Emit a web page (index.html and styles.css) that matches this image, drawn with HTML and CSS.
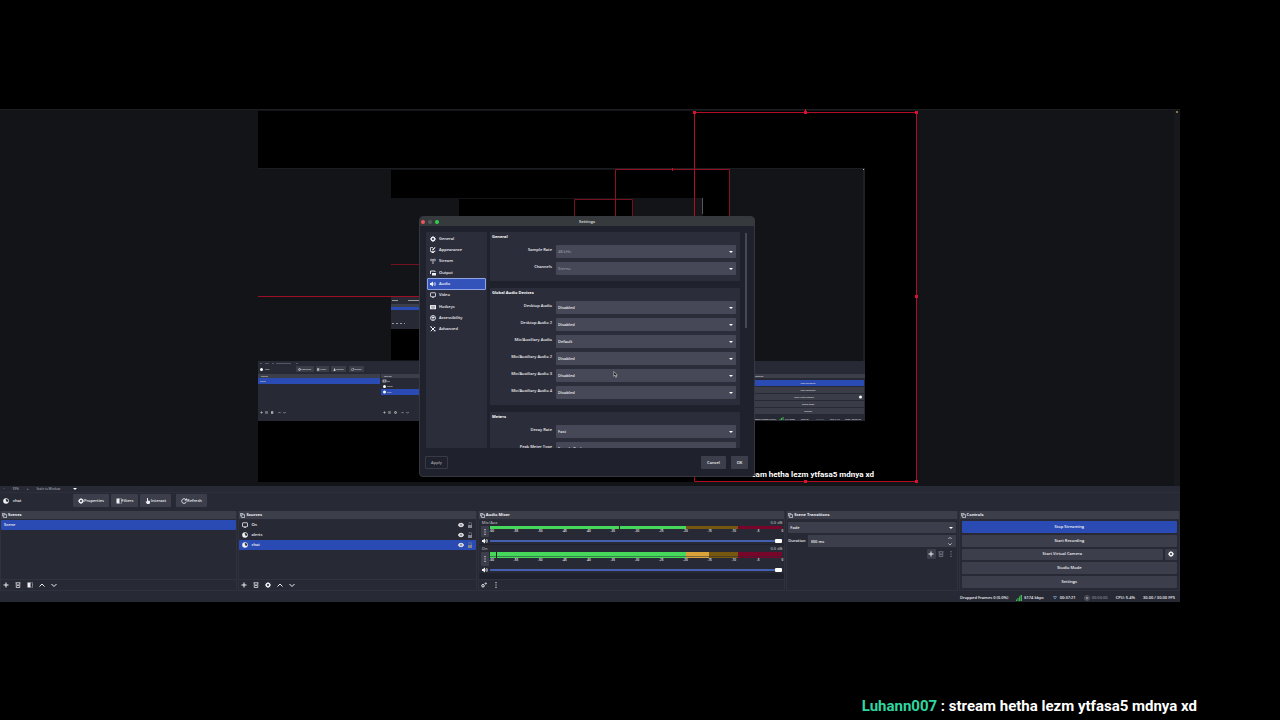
FILE: index.html
```html
<!DOCTYPE html>
<html lang="en">
<head>
<meta charset="utf-8">
<title>Stream</title>
<link rel="stylesheet" href="styles.css">
</head>
<body>

<!-- icons -->
<svg class="defs" width="0" height="0">
    <symbol id="gear" viewBox="0 0 12 12"><circle cx="6" cy="6" r="3.4" fill="none" stroke="currentColor" stroke-width="2.6"/><path d="M6 0v2M6 10v2M0 6h2M10 6h2M1.8 1.8l1.4 1.4M8.8 8.8l1.4 1.4M1.8 10.2l1.4-1.4M8.8 3.2l1.4-1.4" stroke="currentColor" stroke-width="1.8"/></symbol>
    <symbol id="globe" viewBox="0 0 12 12"><circle cx="6" cy="6" r="5.6" fill="currentColor"/><path d="M6.500 2l3 1 1 3-2 2-2-1V5L5 4z" fill="#272935"/></symbol>
    <symbol id="filter" viewBox="0 0 12 12"><path d="M1 1h6v10H1z" fill="currentColor"/><path d="M7 1.6h4v8.8H7" fill="none" stroke="currentColor" stroke-width="1.2" stroke-dasharray="2 1"/></symbol>
    <symbol id="hand" viewBox="0 0 12 12"><path d="M4 0h2v5l4 1v3l-1 3H4L1 7h3z" fill="currentColor"/></symbol>
    <symbol id="refresh" viewBox="0 0 12 12"><path d="M9.6 3.2A4.6 4.6 0 1 0 10.6 7" fill="none" stroke="currentColor" stroke-width="1.8"/><path d="M11.6 0v5H6.8z" fill="currentColor"/></symbol>
    <symbol id="dock" viewBox="0 0 12 12"><path d="M1 8V1h7M4 4h7v7H4z" fill="none" stroke="currentColor" stroke-width="1.6"/></symbol>
    <symbol id="plus" viewBox="0 0 12 12"><path d="M6 1v10M1 6h10" stroke="currentColor" stroke-width="2"/></symbol>
    <symbol id="trash" viewBox="0 0 12 12"><path d="M1 1.5h10M2.5 2v9h7V2M5 5v3M7 5v3" fill="none" stroke="currentColor" stroke-width="1.5"/></symbol>
    <symbol id="up" viewBox="0 0 12 12"><path d="M1 9l5-5 5 5" fill="none" stroke="currentColor" stroke-width="2"/></symbol>
    <symbol id="down" viewBox="0 0 12 12"><path d="M1 4l5 5 5-5" fill="none" stroke="currentColor" stroke-width="2"/></symbol>
    <symbol id="dots" viewBox="0 0 12 12"><path d="M5 0h2v2.4H5zM5 4.8h2v2.4H5zM5 9.6h2V12H5z" fill="currentColor"/></symbol>
    <symbol id="eye" viewBox="0 0 12 12"><path d="M0 6c3-6 9-6 12 0-3 6-9 6-12 0z" fill="currentColor"/><circle cx="6" cy="6" r="2" fill="none" stroke="#272935"/></symbol>
    <symbol id="lock" viewBox="0 0 12 12"><path d="M2 6h8v6H2z" fill="currentColor"/><path d="M4 4.500V3a2.500 2.500 0 0 1 5 0v3" fill="none" stroke="currentColor" stroke-width="1.300"/></symbol>
    <symbol id="screen" viewBox="0 0 12 12"><rect x="1" y="1.500" width="10" height="8" rx="1" fill="none" stroke="currentColor" stroke-width="1.600"/><path d="M4 11.200h4" stroke="currentColor" stroke-width="1.400"/></symbol>
    <symbol id="speaker" viewBox="0 0 12 12"><path d="M0 4h2l4-3v10L2 8H0z" fill="currentColor"/><path d="M7.500 4q1.500 2 0 4M9.300 2q3 4 0 8" fill="none" stroke="currentColor" stroke-width="1.400"/></symbol>
    <symbol id="look" viewBox="0 0 12 12"><path d="M10 7v2H1V1h5" fill="none" stroke="currentColor" stroke-width="1.500"/><path d="M4 7l1-3 5-4 1 1-4 5zM3 10h5v2H3z" fill="currentColor"/></symbol>
    <symbol id="antenna" viewBox="0 0 12 12"><path d="M6 4v8M2.500 1.500q-2 2 0 5M9.500 1.500q2 2 0 5M3 3.500h6" fill="none" stroke="currentColor" stroke-width="1.500"/></symbol>
    <symbol id="output" viewBox="0 0 12 12"><path d="M1 8V2h9v2" fill="none" stroke="currentColor" stroke-width="1.800"/><path d="M4 6h8v5H4z" fill="currentColor"/></symbol>
    <symbol id="keys" viewBox="0 0 12 12"><rect y="2" width="12" height="8.500" rx="1" fill="currentColor"/><path d="M2 4.500h8M2 6.500h8M3.500 8.600h5" stroke="#2b2d3a" stroke-dasharray="1.500 .7"/></symbol>
    <symbol id="person" viewBox="0 0 12 12"><circle cx="6" cy="6" r="5" fill="none" stroke="currentColor" stroke-width="1.700"/><circle cx="6" cy="3.500" r="1.200" fill="currentColor"/><path d="M3 5h6M6 5v5" stroke="currentColor" stroke-width="1.800"/></symbol>
    <symbol id="tools" viewBox="0 0 12 12"><path d="M1.500 1.500l9 9M10 2l-8.500 8.500" stroke="currentColor" stroke-width="2"/><path d="M0 3l3-3M8 1.500l2.500 2.500M8 11l3-3" stroke="currentColor" stroke-width="1.500"/></symbol>
    <symbol id="gears" viewBox="0 0 12 12"><circle cx="4" cy="7.500" r="2.500" fill="none" stroke="currentColor" stroke-width="2"/><circle cx="9.500" cy="3" r="1.300" fill="none" stroke="currentColor" stroke-width="1.800"/></symbol>
</svg>

<div class="app">
    <div class="preview">
        <div class="stage">
            <svg class="canvas" viewBox="0 0 658 371">
                <rect width="658" height="371" fill="#000"/>
                <!-- first mirror -->
                <rect y="57" width="607" height="253" fill="#272935"/>
                <rect y="57" width="607" height="193" fill="#131418"/>
                <path d="M0 57.500h607" stroke="#1c1d21"/>
                <path d="M606 58v192" stroke="#2b2c30"/>
                <rect x="605" y="58" width="1" height="1" fill="#cb9"/>
                <rect x="133" y="59" width="338" height="190" fill="#000"/>
                <!-- second mirror -->
                <rect x="133" y="87" width="312" height="131" fill="#272935"/>
                <rect x="133" y="87" width="312" height="99" fill="#131418"/>
                <rect x="201" y="88" width="174" height="98" fill="#000"/>
                <path d="M444.500 87v16" stroke="#55575d"/>
                <path d="M316.500 186V88.500h58V186" fill="none" stroke="#74101f"/>
                <rect x="133" y="153" width="224" height="1" fill="#74101f"/>
                <rect x="133" y="193" width="60" height="3" fill="#3c3e4a"/>
                <rect x="133" y="196" width="60" height="3" fill="#2a4bb4"/>
                <path d="M134 189.500h6M150 189.500h12" stroke="#999"/>
                <path d="M134 212.500h13" stroke="#999" stroke-dasharray="2 2"/>
                <path d="M357.500 249V58.500h114V249" fill="none" stroke="#8e1023"/>
                <path d="M414.500 57v3" stroke="#c01030"/>
                <!-- bottom docks of the first mirror -->
                <g class="mini">
                    <path d="M2 252.500h2M7 252.500h4M14 252.500h2M18 252.500h15M38 252.500h2" stroke="#555762"/>
                    <rect x="38" y="255" width="18" height="6" fill="#3a3c48"/>
                    <rect x="58" y="255" width="13" height="6" fill="#3a3c48"/>
                    <rect x="73" y="255" width="15" height="6" fill="#3a3c48"/>
                    <rect x="91" y="255" width="15" height="6" fill="#3a3c48"/>
                    <circle cx="3.500" cy="258.500" r="1.500" fill="#fff"/>
                    <use href="#gear" x="40" y="257" width="3" height="3"/>
                    <use href="#filter" x="59" y="257" width="3" height="3"/>
                    <use href="#hand" x="75" y="257" width="3" height="3"/>
                    <use href="#refresh" x="93" y="257" width="3" height="3"/>
                    <text x="7" y="259">chat</text>
                    <text x="43" y="259">Properties</text>
                    <text x="62" y="259">Filters</text>
                    <text x="78" y="259">Interact</text>
                    <text x="96" y="259">Refresh</text>
                    <rect y="263" width="122" height="4" fill="#3c3e4a"/>
                    <rect x="123" y="263" width="122" height="4" fill="#3c3e4a"/>
                    <text x="3" y="266">Scenes</text>
                    <text x="126" y="266">Sources</text>
                    <rect y="267" width="122" height="6" fill="#2a4bb4"/>
                    <text x="2" y="271">Scene</text>
                    <text x="129" y="271">On</text>
                    <text x="129" y="276">alerts</text>
                    <rect x="123" y="278" width="122" height="6" fill="#2a4bb4"/>
                    <text x="129" y="282">chat</text>
                    <rect x="125" y="269" width="3" height="2" fill="none" stroke="#fff" stroke-width=".6"/>
                    <circle cx="126.500" cy="275.500" r="1.500" fill="#fff"/>
                    <circle cx="126.500" cy="281" r="1.500" fill="#fff"/>
                    <use href="#plus" x="2" y="300" width="3" height="3"/>
                    <use href="#trash" x="7" y="300" width="3" height="3"/>
                    <use href="#filter" x="13" y="300" width="3" height="3"/>
                    <use href="#up" x="20" y="300" width="3" height="3"/>
                    <use href="#down" x="25" y="300" width="3" height="3"/>
                    <use href="#plus" x="125" y="300" width="3" height="3"/>
                    <use href="#trash" x="130" y="300" width="3" height="3"/>
                    <use href="#gear" x="136" y="300" width="3" height="3"/>
                    <use href="#up" x="143" y="300" width="3" height="3"/>
                    <use href="#down" x="148" y="300" width="3" height="3"/>
                    <rect x="493" y="263" width="114" height="4" fill="#3c3e4a"/>
                    <text x="497" y="266">Controls</text>
                    <rect x="494" y="269" width="112" height="6" fill="#2a4bb4"/>
                    <rect x="494" y="276" width="112" height="6" fill="#3a3c48"/>
                    <rect x="494" y="283" width="112" height="6" fill="#3a3c48"/>
                    <rect x="494" y="290" width="112" height="6" fill="#3a3c48"/>
                    <rect x="494" y="297" width="112" height="6" fill="#3a3c48"/>
                    <g text-anchor="middle">
                        <text x="550" y="273">Stop Streaming</text>
                        <text x="550" y="280">Start Recording</text>
                        <text x="546" y="287">Start Virtual Camera</text>
                        <text x="550" y="294">Studio Mode</text>
                        <text x="550" y="301">Settings</text>
                    </g>
                    <circle cx="602.500" cy="286" r="1.500" fill="#fff"/>
                    <text x="494" y="309">Dropped Frames 0 (0.0%)</text>
                    <path d="M522 309v-1M523.500 309v-2M525 309v-3" stroke="#3fb950"/>
                    <text x="527" y="309">6174 kbps</text>
                    <text x="543" y="309">00:37:21</text>
                    <text x="558" y="309" fill="#777984">00:00:00</text>
                    <text x="572" y="309">CPU: 5.4%</text>
                    <text x="587" y="309">30.00 / 30.00 FPS</text>
                </g>
                <text class="mini-chat" x="616" y="366" text-anchor="end">Luhann007 : stream hetha lezm ytfasa5 mdnya xd</text>
                <!-- selection -->
                <rect y="185" width="436" height="1" fill="#a00e26"/>
                <path d="M436.500 1.500h222v369h-222z" fill="none" stroke="#b30d26"/>
                <path d="M547.500 -2v5" stroke="#d81233"/>
                <path d="M435 0h3v3h-3zM546 0h3v3h-3zM657 0h3v3h-3zM657 184h3v3h-3zM546 369h3v3h-3zM657 369h3v3h-3z" fill="#d81233"/>
            </svg>

            <div class="dialog" role="dialog" aria-label="Settings">
                <div class="titlebar">
                    <span class="light red"></span><span class="light off"></span><span class="light green"></span>
                    <h1>Settings</h1>
                </div>
                <div class="dialog-body">
                    <nav class="side">
                        <a href="#"><svg><use href="#gear"/></svg>General</a>
                        <a href="#"><svg><use href="#look"/></svg>Appearance</a>
                        <a href="#"><svg><use href="#antenna"/></svg>Stream</a>
                        <a href="#"><svg><use href="#output"/></svg>Output</a>
                        <a href="#" class="active"><svg><use href="#speaker"/></svg>Audio</a>
                        <a href="#"><svg><use href="#screen"/></svg>Video</a>
                        <a href="#"><svg><use href="#keys"/></svg>Hotkeys</a>
                        <a href="#"><svg><use href="#person"/></svg>Accessibility</a>
                        <a href="#"><svg><use href="#tools"/></svg>Advanced</a>
                    </nav>
                    <div class="groups">
                        <section class="group">
                            <h2>General</h2>
                            <div class="row"><label for="rate">Sample Rate</label><div class="combo"><select id="rate" disabled><option>48 kHz</option></select></div></div>
                            <div class="row"><label for="channels">Channels</label><div class="combo"><select id="channels" disabled><option>Stereo</option></select></div></div>
                        </section>
                        <section class="group">
                            <h2>Global Audio Devices</h2>
                            <div class="row"><label for="desk1">Desktop Audio</label><div class="combo"><select id="desk1"><option>Disabled</option></select></div></div>
                            <div class="row"><label for="desk2">Desktop Audio 2</label><div class="combo"><select id="desk2"><option>Disabled</option></select></div></div>
                            <div class="row"><label for="mic1">Mic/Auxiliary Audio</label><div class="combo"><select id="mic1"><option>Default</option></select></div></div>
                            <div class="row"><label for="mic2">Mic/Auxiliary Audio 2</label><div class="combo"><select id="mic2"><option>Disabled</option></select></div></div>
                            <div class="row"><label for="mic3">Mic/Auxiliary Audio 3</label><div class="combo"><select id="mic3"><option>Disabled</option></select></div></div>
                            <div class="row"><label for="mic4">Mic/Auxiliary Audio 4</label><div class="combo"><select id="mic4"><option>Disabled</option></select></div></div>
                        </section>
                        <section class="group">
                            <h2>Meters</h2>
                            <div class="row"><label for="decay">Decay Rate</label><div class="combo"><select id="decay"><option>Fast</option></select></div></div>
                            <div class="row"><label for="peak">Peak Meter Type</label><div class="combo"><select id="peak"><option>Sample Peak</option></select></div></div>
                        </section>
                    </div>
                    <div class="scroll"></div>
                </div>
                <div class="dialog-foot">
                    <button class="apply" disabled>Apply</button>
                    <button>Cancel</button>
                    <button class="ok">OK</button>
                </div>
                <svg class="cursor" viewBox="0 0 8 12"><path d="M1 1v8l2-2 1.500 4 1.500-1-1.500-3H7z" fill="#111" stroke="#ddd"/></svg>
            </div>
        </div>
        <div class="gutter"></div>
    </div>

    <div class="zoombar"><span>−</span><span>59%</span><span>+</span><span>Scale to Window</span><i class="caret"></i></div>

    <div class="sourcebar">
        <div class="current"><svg><use href="#globe"/></svg>chat</div>
        <button class="props"><svg><use href="#gear"/></svg>Properties</button>
        <button class="filters"><svg><use href="#filter"/></svg>Filters</button>
        <button><svg><use href="#hand"/></svg>Interact</button>
        <button class="reload"><svg><use href="#refresh"/></svg>Refresh</button>
    </div>

    <div class="docks">
        <section class="dock">
            <h2><svg><use href="#dock"/></svg>Scenes</h2>
            <ul class="list">
                <li class="selected">Scene</li>
            </ul>
            <div class="tools">
                <button aria-label="Add scene"><svg><use href="#plus"/></svg></button>
                <button aria-label="Remove scene"><svg><use href="#trash"/></svg></button>
                <button aria-label="Scene filters"><svg><use href="#filter"/></svg></button>
                <button aria-label="Move scene up"><svg><use href="#up"/></svg></button>
                <button aria-label="Move scene down"><svg><use href="#down"/></svg></button>
            </div>
        </section>

        <section class="dock">
            <h2><svg><use href="#dock"/></svg>Sources</h2>
            <ul class="list">
                <li><svg><use href="#screen"/></svg><span>On</span><svg><use href="#eye"/></svg><svg class="dim"><use href="#lock"/></svg></li>
                <li><svg><use href="#globe"/></svg><span>alerts</span><svg><use href="#eye"/></svg><svg class="dim"><use href="#lock"/></svg></li>
                <li class="selected"><svg><use href="#globe"/></svg><span>chat</span><svg><use href="#eye"/></svg><svg class="dim"><use href="#lock"/></svg></li>
            </ul>
            <div class="tools">
                <button aria-label="Add source"><svg><use href="#plus"/></svg></button>
                <button aria-label="Remove source"><svg><use href="#trash"/></svg></button>
                <button aria-label="Source properties"><svg><use href="#gear"/></svg></button>
                <button aria-label="Move source up"><svg><use href="#up"/></svg></button>
                <button aria-label="Move source down"><svg><use href="#down"/></svg></button>
            </div>
        </section>

        <section class="dock">
            <h2><svg><use href="#dock"/></svg>Audio Mixer</h2>
            <div class="mixer">
                <div class="channel">
                    <div class="names"><label for="vol1">Mic/Aux</label><span>0.0 dB</span></div>
                    <button class="menu" aria-label="Mic/Aux options"><svg><use href="#dots"/></svg></button>
                    <div class="levels">
                        <div class="meter"><i class="g"></i><i class="y"></i><i class="r"></i><b class="peak mid"></b></div>
                        <div class="scale"><span>-60</span><span>-55</span><span>-50</span><span>-45</span><span>-40</span><span>-35</span><span>-30</span><span>-25</span><span>-20</span><span>-15</span><span>-10</span><span>-5</span><span>0</span></div>
                    </div>
                    <button class="mute" aria-label="Mute Mic/Aux"><svg><use href="#speaker"/></svg></button>
                    <input id="vol1" type="range" min="0" max="100" value="100">
                </div>
                <div class="channel">
                    <div class="names"><label for="vol2">On</label><span>0.0 dB</span></div>
                    <button class="menu" aria-label="On options"><svg><use href="#dots"/></svg></button>
                    <div class="levels">
                        <div class="meter stereo"><i class="g"></i><i class="yy"></i><i class="y short"></i><i class="r"></i><b class="peak low"></b></div>
                        <div class="scale"><span>-60</span><span>-55</span><span>-50</span><span>-45</span><span>-40</span><span>-35</span><span>-30</span><span>-25</span><span>-20</span><span>-15</span><span>-10</span><span>-5</span><span>0</span></div>
                    </div>
                    <button class="mute" aria-label="Mute On"><svg><use href="#speaker"/></svg></button>
                    <input id="vol2" type="range" min="0" max="100" value="100">
                </div>
            </div>
            <div class="tools">
                <button aria-label="Advanced audio"><svg><use href="#gears"/></svg></button>
                <button aria-label="Mixer menu"><svg><use href="#dots"/></svg></button>
            </div>
        </section>

        <section class="dock">
            <h2><svg><use href="#dock"/></svg>Scene Transitions</h2>
            <div class="transitions">
                <div class="combo"><select aria-label="Transition"><option>Fade</option></select></div>
                <div class="duration">
                    <label for="duration">Duration</label>
                    <div class="spin">
                        <input id="duration" type="text" value="300 ms">
                        <svg><use href="#up"/></svg>
                        <svg><use href="#down"/></svg>
                    </div>
                </div>
                <div class="trans-tools">
                    <button class="add" aria-label="Add transition"><svg><use href="#plus"/></svg></button>
                    <button class="dim" aria-label="Remove transition"><svg><use href="#trash"/></svg></button>
                    <button class="dim" aria-label="Transition menu"><svg><use href="#dots"/></svg></button>
                </div>
            </div>
        </section>

        <section class="dock">
            <h2><svg><use href="#dock"/></svg>Controls</h2>
            <div class="controls">
                <button class="live">Stop Streaming</button>
                <button>Start Recording</button>
                <div class="camera"><button>Start Virtual Camera</button><button aria-label="Camera settings"><svg><use href="#gear"/></svg></button></div>
                <button>Studio Mode</button>
                <button>Settings</button>
            </div>
        </section>
    </div>

    <div class="status">
        <span>Dropped Frames 0 (0.0%)</span>
        <span><svg viewBox="0 0 12 12"><path d="M0 12V9h2v3zM3 12V6h2v6zM6 12V3h2v9zM9 12V0h3v12z" fill="#3fb950"/></svg>6174 kbps</span>
        <span><svg viewBox="0 0 12 12"><path d="M2 4q4-2 8 0M4 7q2-2 4 0" fill="none" stroke="#6b94b8" stroke-width="2"/></svg>00:37:21</span>
        <span class="dim"><svg viewBox="0 0 12 12"><circle cx="6" cy="6" r="5" fill="none" stroke="currentColor"/><circle cx="6" cy="6" r="3" fill="currentColor"/></svg>00:00:00</span>
        <span>CPU: 5.4%</span>
        <span>30.00 / 30.00 FPS</span>
    </div>
</div>

<p class="chat"><span>Luhann007</span> : stream hetha lezm ytfasa5 mdnya xd</p>

</body>
</html>
```
FILE: styles.css
```css
* {
    box-sizing: border-box;
}

body {
    margin: 0;
    background: #000;
    color: #f0f0f4;
    font-family: "Open Sans", sans-serif;
    font-size: 4px;
    font-weight: 600;
    line-height: 8px;
    overflow: hidden;
}

.defs {
    position: absolute;
}

button, select, input {
    margin: 0;
    padding: 0;
    border: 0;
    background: #3c3f4b;
    color: inherit;
    font: inherit;
    border-radius: 1px;
}

svg {
    flex: none;
    width: 6px;
    height: 6px;
}

h1, h2, ul, p {
    margin: 0;
    padding: 0;
    font-size: inherit;
}

.dim {
    color: #83858f;
}

.app {
    margin: 109px 100px 0 0;
    background: #272935;
}

/* preview */
.preview {
    display: flex;
    padding-top: 1px;
    height: 377px;
    background: #131418;
    border-top: 1px solid #1c1d21;
}

.gutter {
    width: 6px;
    background: #18191d;
}

.gutter::before {
    content: "";
    display: block;
    width: 2px;
    height: 2px;
    margin: 0 auto;
    background: #8a7340;
}

.stage {
    position: relative;
    flex: 1;
}

.canvas {
    display: block;
    width: 100%;
    height: auto;
    max-width: 658px;
    margin: 0 auto;
    overflow: visible;
}

.mini {
    color: #ddd;
    fill: #ddd;
    font-size: 2px;
}

.mini-chat {
    fill: #fff;
    font: bold 8px Roboto, sans-serif;
}

/* settings window */
.dialog {
    position: absolute;
    top: 105px;
    left: 0;
    right: 0;
    width: 336px;
    margin: 0 auto;
    background: #1f212c;
    border: 1px solid #363840;
    border-radius: 4px;
    overflow: hidden;
}

.titlebar {
    display: flex;
    align-items: center;
    gap: 3px;
    height: 9px;
    padding-left: 1px;
    background: #373a3c;
}

.titlebar h1 {
    flex: 1;
    padding-right: 22px;
    text-align: center;
    color: #c4c5c8;
}

.light {
    width: 4px;
    height: 4px;
    border-radius: 50%;
}

.red { background: #f0555a; }
.off { background: #55585c; }
.green { background: #2fd04a; }

.dialog-body {
    display: flex;
    height: 216px;
    margin: 6px 6px 0;
}

.side {
    display: grid;
    grid-auto-rows: 1fr;
    width: 61px;
    padding: 1px 1px 113px;
    background: #2b2d3a;
}

.side a {
    display: flex;
    align-items: center;
    gap: 3px;
    padding-left: 2px;
    border: 1px solid transparent;
    border-radius: 1px;
    color: inherit;
    text-decoration: none;
}

.side .active {
    background: #3353bb;
    border-color: #8ea4e6;
}

.groups {
    flex: 1;
    margin-left: 3px;
    overflow: hidden;
}

.group {
    padding-bottom: 2px;
    margin-bottom: 7px;
    background: #2b2d3a;
}

.group h2 {
    height: 13px;
    padding-left: 2px;
    line-height: 10px;
    color: #fff;
}

.row {
    display: grid;
    grid-template-columns: 62px 1fr;
    gap: 4px;
    height: 13px;
    margin: 0 4px 4px 0;
}

.row label {
    text-align: right;
    line-height: 10px;
}

.combo {
    position: relative;
}

.combo select {
    display: block;
    appearance: none;
    width: 100%;
    height: 13px;
    padding-left: 2px;
    background: #464857;
}

.combo select:disabled {
    color: #8e909b;
    opacity: 1;
}

.combo::after, .caret {
    border: 2px solid transparent;
    border-top-color: #fff;
    border-bottom: 0;
}

.combo::after {
    content: "";
    position: absolute;
    right: 3px;
    top: 6px;
}

.scroll {
    width: 2px;
    height: 95px;
    margin: 1px 1px 0 5px;
    background: #464857;
}

.dialog-foot {
    display: flex;
    gap: 5px;
    padding: 8px 6px 7px 5px;
}

.dialog-foot button {
    width: 25px;
    height: 13px;
}

.dialog-foot .ok {
    width: 17px;
}

.dialog-foot .apply {
    width: 23px;
    margin-right: auto;
    background: none;
    border: 1px solid #383a47;
    color: #a2a4ad;
}

.cursor {
    position: absolute;
    left: 193px;
    top: 154px;
    width: 5px;
    height: 7px;
}

/* bars under the preview */
.zoombar {
    display: flex;
    align-items: center;
    height: 7px;
    gap: 8px;
    padding-left: 3px;
    font-size: 3px;
    line-height: 6px;
    color: #9a9ca6;
    border-bottom: 1px solid #2d303c;
}

.caret {
    margin-left: 5px;
}

.sourcebar {
    display: flex;
    height: 18px;
    padding: 1px 3px 4px;
    gap: 2px;
}

.current {
    display: flex;
    align-items: center;
    gap: 4px;
    width: 68px;
}

.sourcebar button {
    display: flex;
    align-items: center;
    justify-content: center;
    width: 31px;
}

.sourcebar .props {
    width: 36px;
}

.sourcebar .filters {
    width: 27px;
}

.sourcebar .reload {
    margin-left: 3px;
}

/* docks */
.docks {
    display: grid;
    grid-template-columns: 237fr 238fr 307fr 171fr 221fr;
    gap: 1px;
    height: 80px;
}

.dock {
    display: flex;
    flex-direction: column;
    min-width: 0;
    border: 1px solid #2f323e;
    border-top: 0;
}

.dock h2 {
    display: flex;
    align-items: center;
    gap: 1px;
    height: 8px;
    padding-left: 1px;
    background: #3c3e4a;
}

.dock h2 svg {
    width: 5px;
    height: 5px;
}

.list {
    flex: 1;
    padding-top: 1px;
    list-style: none;
}

.list li {
    display: flex;
    align-items: center;
    gap: 3px;
    height: 10px;
    padding: 0 3px;
    border-radius: 1px;
}

.list span {
    flex: 1;
}

.list .selected {
    background: #2a4bb4;
}

.tools {
    display: flex;
    align-items: center;
    gap: 6px;
    height: 11px;
    padding-left: 2px;
    border-top: 1px solid #30333f;
}

.tools button {
    display: grid;
    background: none;
}

/* mixer */
.mixer {
    flex: 1;
    background: #1f212c;
}

.channel {
    display: grid;
    grid-template-columns: 8px 1fr;
    column-gap: 1px;
    padding: 0 2px;
    background: #272935;
    margin-bottom: 1px;
}

.names {
    grid-column: 1 / 3;
    display: flex;
    justify-content: space-between;
    padding: 1px 0 0 1px;
    line-height: 6px;
    color: #a9abb4;
}

.menu, .mute {
    display: grid;
    place-items: center;
}

.mute {
    background: none;
}

.meter {
    position: relative;
    display: flex;
    height: 3px;
}

.stereo {
    height: 6px;
}

.meter i {
    width: 15%;
}

.meter .g { width: 67%; background: #45d85b; }
.meter .y { width: 18%; background: #75570f; }
.meter .yy { width: 8%; background: #d9a33a; }
.meter .short { width: 10%; }
.meter .r { background: #78062a; }

/* gap between the left and right channel */
.stereo::after {
    content: "";
    position: absolute;
    top: 4px;
    left: 0;
    right: 0;
    height: 1px;
    background: #27293580;
}

.peak {
    position: absolute;
    width: 1px;
    height: 100%;
    background: #102012;
}

.mid { left: 44%; }
.low { left: 2%; }

.scale {
    display: flex;
    justify-content: space-between;
    height: 8px;
    padding-left: 2px;
    font-size: 3px;
    line-height: 5px;
}

.scale span {
    width: 0;
    display: flex;
    justify-content: center;
}

input[type=range] {
    appearance: none;
    height: 7px;
    width: 100%;
    background: none;
}

input[type=range]::-webkit-slider-runnable-track {
    height: 2px;
    background: #4560b0;
}

input[type=range]::-webkit-slider-thumb {
    appearance: none;
    width: 7px;
    height: 4px;
    margin-top: -1px;
    border-radius: 1px;
    background: #fff;
}

/* transitions */
.transitions {
    display: grid;
    gap: 2px;
    padding: 3px 1px;
}

.transitions .combo select {
    height: 11px;
    background: #3c3f4b;
}

.transitions .combo::after {
    top: 5px;
}

.duration {
    display: flex;
    align-items: center;
    gap: 2px;
}

.spin {
    flex: 1;
    display: grid;
    grid-template-columns: 1fr 8px;
    align-items: center;
    background: #3c3f4b;
}

.spin input {
    grid-row: 1 / 3;
    width: 100%;
    height: 12px;
    padding-left: 3px;
    background: none;
}

.spin svg {
    width: 4px;
    height: 4px;
}

.trans-tools {
    display: flex;
    justify-content: flex-end;
    gap: 1px;
}

.trans-tools button {
    display: grid;
    place-items: center;
    width: 9px;
    height: 10px;
    background: none;
}

.trans-tools .add {
    background: #3c3f4b;
}

/* controls */
.controls {
    display: grid;
    grid-auto-rows: 1fr;
    gap: 2px;
    height: 71px;
    padding: 2px;
}

.camera {
    display: grid;
    grid-template-columns: 1fr 12px;
    gap: 2px;
}

.camera button {
    display: grid;
    place-items: center;
}

.controls .live {
    background: #2a4bb4;
}

.status {
    display: flex;
    justify-content: space-between;
    align-items: center;
    width: 220px;
    height: 11px;
    margin-left: auto;
    padding: 2px 5px 0 0;
}

.status span {
    display: flex;
    align-items: center;
    gap: 2px;
}

/* chat line */
.chat {
    margin: 94px 83px 0 0;
    text-align: right;
    font: bold 15px/20px Roboto, sans-serif;
    color: #fff;
}

.chat span {
    color: #2fd7a0;
}
```
